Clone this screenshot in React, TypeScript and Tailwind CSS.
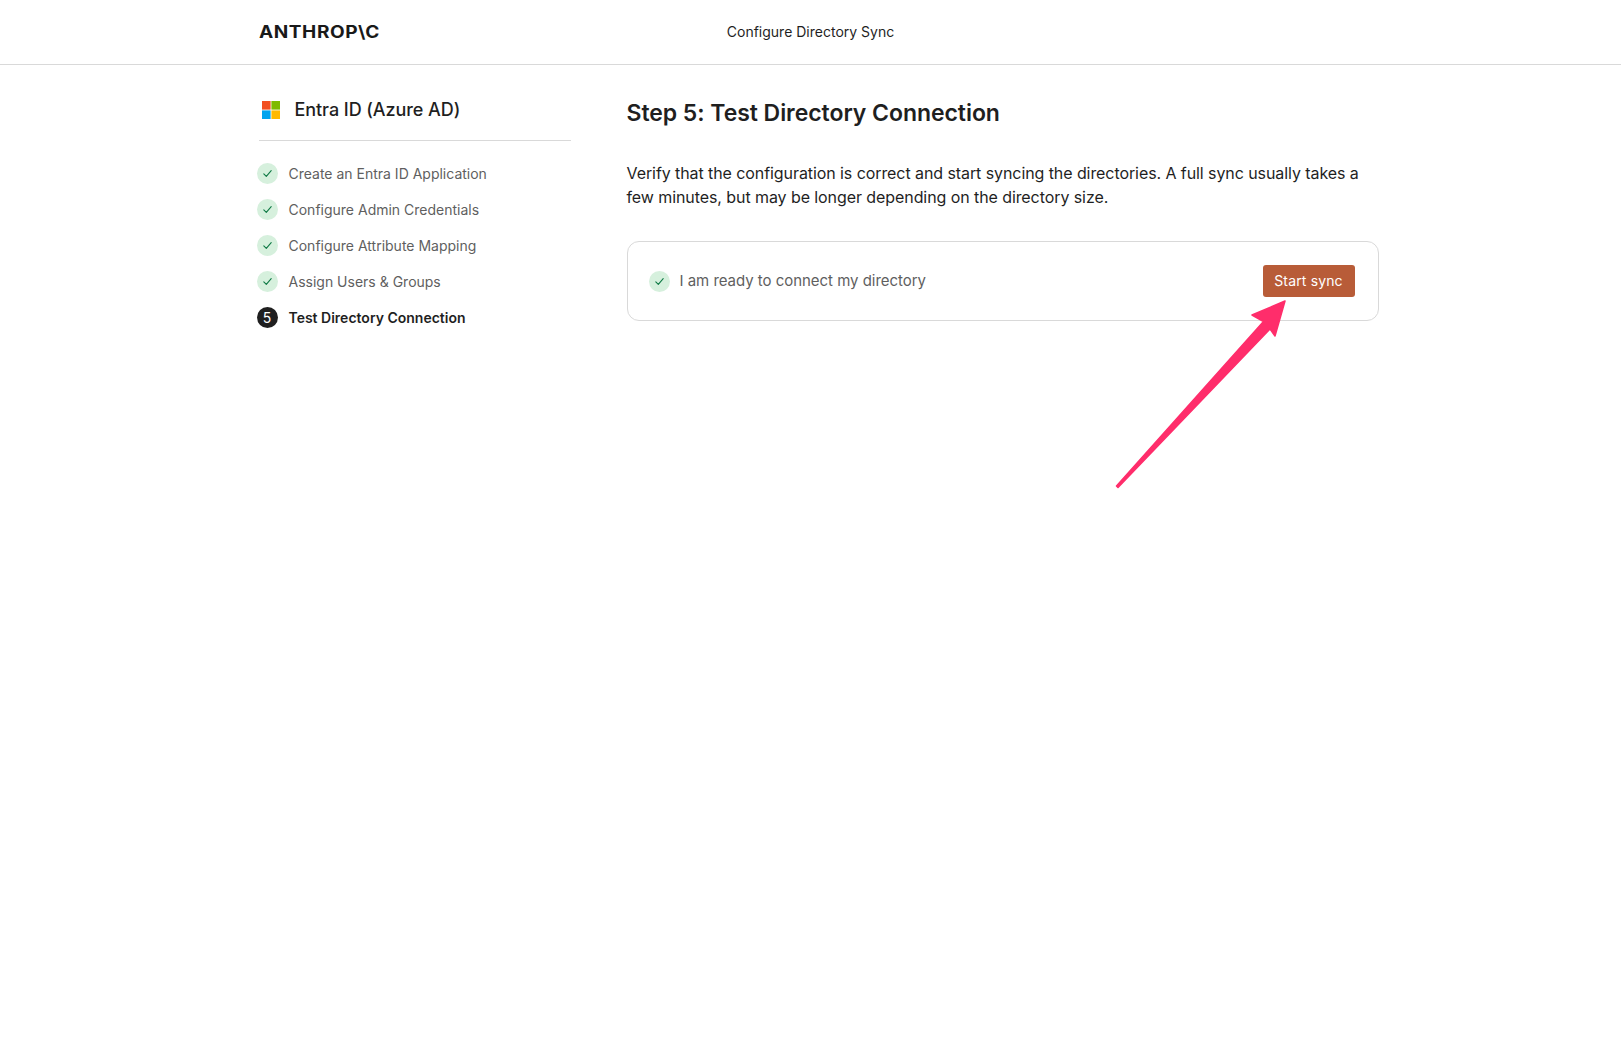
import React from "react";

const steps = [
  "Create an Entra ID Application",
  "Configure Admin Credentials",
  "Configure Attribute Mapping",
  "Assign Users & Groups",
];

function Check() {
  return (
    <span className="flex h-[21px] w-[21px] shrink-0 items-center justify-center rounded-full bg-[#d6f0dd]">
      <svg width="11" height="11" viewBox="0 0 11 11" fill="none">
        <path d="M1.8 5.8 4.3 8.4 9.2 2.6" stroke="#0f7a45" strokeWidth="1.1" strokeLinecap="round" strokeLinejoin="round" />
      </svg>
    </span>
  );
}

export default function App() {
  return (
    <div className="relative min-h-[1045px] bg-white font-['Inter',sans-serif] text-[#1f1f1f]">
      <header className="h-[65px] border-b border-[#d9d9d9]">
        <div className="relative mx-auto flex h-full w-[1138px] items-center justify-center pb-[1px]">
          <span className="absolute left-[17px] top-[20px] origin-left scale-x-[1.12] text-[17px] leading-[24px] font-bold tracking-[0.5px] text-[#191919]">ANTHROP\C</span>
          <span className="text-sm text-[#1f1f1f]">Configure Directory Sync</span>
        </div>
      </header>
      <div className="mx-auto flex w-[1138px] pl-[15px]">
        <aside className="w-[370px] shrink-0">
          <div className="ml-[2px] flex h-[76px] w-[312px] items-center gap-[15px] border-b border-[#d9d9d9] pl-[3px] pt-[14px]">
            <svg width="18" height="18" viewBox="0 0 18 18" className="shrink-0">
              <rect width="8.6" height="8.6" fill="#f25022" />
              <rect x="9.4" width="8.6" height="8.6" fill="#7fba00" />
              <rect y="9.4" width="8.6" height="8.6" fill="#00a4ef" />
              <rect x="9.4" y="9.4" width="8.6" height="8.6" fill="#ffb900" />
            </svg>
            <span className="text-lg leading-7 font-medium tracking-[-0.07px]">Entra ID (Azure AD)</span>
          </div>
          <ul className="mt-[22px] flex flex-col gap-[15px]">
            {steps.map((s) => (
              <li key={s} className="flex h-[21px] items-center gap-[11px] text-sm text-[#5f5f5f]">
                <Check />
                {s}
              </li>
            ))}
            <li className="flex h-[21px] items-center gap-[11px] text-sm font-semibold text-[#1f1f1f]">
              <span className="flex h-[21px] w-[21px] shrink-0 items-center justify-center rounded-full bg-[#1f1f1f] text-sm font-normal text-white">5</span>
              Test Directory Connection
            </li>
          </ul>
        </aside>
        <main className="w-[752px] pt-[32px]">
          <h1 className="text-[23px] leading-8 font-semibold tracking-[-0.05px]">Step 5: Test Directory Connection</h1>
          <p className="mt-[32px] text-base leading-6 tracking-[-0.08px]">
            Verify that the configuration is correct and start syncing the directories. A full sync usually takes a few minutes, but may be longer depending on the directory size.
          </p>
          <div className="mt-[32px] flex h-[80px] items-center justify-between rounded-xl border border-[#d9d9d9] pl-[21px] pr-[23px]">
            <div className="flex items-center gap-[10px] text-[15px] tracking-[-0.03px] text-[#5f5f5f]">
              <Check />
              I am ready to connect my directory
            </div>
            <button className="h-[32px] w-[92px] rounded-[3px] bg-[#b85c38] text-sm font-normal tracking-[0.15px] text-white">Start sync</button>
          </div>
        </main>
      </div>
      <svg className="pointer-events-none absolute left-[1100px] top-[290px]" width="200" height="210" viewBox="1100 290 200 210" fill="none">
        <path
          d="M1285 301 L1252 315 L1263.5 321.5 L1116.5 486 L1118 487.5 L1270 329 L1275 336 Z"
          fill="#ff2d6b"
          stroke="#ff2d6b"
          strokeWidth="1.5"
          strokeLinejoin="round"
        />
      </svg>
    </div>
  );
}
